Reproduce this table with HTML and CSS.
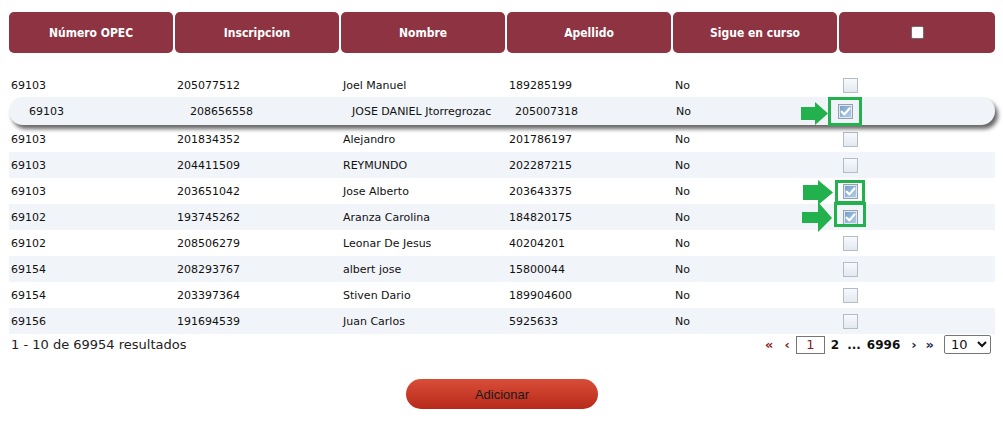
FILE: index.html
```html
<!DOCTYPE html>
<html lang="es">
<head>
<meta charset="utf-8">
<title>Listado</title>
<link rel="stylesheet" href="styles.css">
</head>
<body>
<div class="page">
  <div class="table">
    <div class="head">
      <div class="th">Número OPEC</div>
      <div class="th">Inscripcion</div>
      <div class="th">Nombre</div>
      <div class="th">Apellido</div>
      <div class="th">Sigue en curso</div>
      <div class="th"><span class="hbox"></span></div>
    </div>

    <div class="rows">
      <div class="row">
        <div class="td">69103</div><div class="td">205077512</div><div class="td">Joel Manuel</div><div class="td">189285199</div><div class="td">No</div><div class="td cb"><span class="box"></span></div>
      </div>
      <div class="row lifted">
        <div class="bar">
          <div class="td">69103</div><div class="td">208656558</div><div class="td">JOSE DANIEL Jtorregrozac</div><div class="td">205007318</div><div class="td">No</div><div class="td cb"><span class="box checked"><svg viewBox="0 0 10 10" class="tick"><path d="M1.5 5.2 L4 7.6 L8.6 2.2" /></svg></span></div>
        </div>
      </div>
      <div class="row">
        <div class="td">69103</div><div class="td">201834352</div><div class="td">Alejandro</div><div class="td">201786197</div><div class="td">No</div><div class="td cb"><span class="box"></span></div>
      </div>
      <div class="row alt">
        <div class="td">69103</div><div class="td">204411509</div><div class="td">REYMUNDO</div><div class="td">202287215</div><div class="td">No</div><div class="td cb"><span class="box"></span></div>
      </div>
      <div class="row">
        <div class="td">69103</div><div class="td">203651042</div><div class="td">Jose Alberto</div><div class="td">203643375</div><div class="td">No</div><div class="td cb"><span class="box checked"><svg viewBox="0 0 10 10" class="tick"><path d="M1.5 5.2 L4 7.6 L8.6 2.2" /></svg></span></div>
      </div>
      <div class="row alt">
        <div class="td">69102</div><div class="td">193745262</div><div class="td">Aranza Carolina</div><div class="td">184820175</div><div class="td">No</div><div class="td cb"><span class="box checked"><svg viewBox="0 0 10 10" class="tick"><path d="M1.5 5.2 L4 7.6 L8.6 2.2" /></svg></span></div>
      </div>
      <div class="row">
        <div class="td">69102</div><div class="td">208506279</div><div class="td">Leonar De Jesus</div><div class="td">40204201</div><div class="td">No</div><div class="td cb"><span class="box"></span></div>
      </div>
      <div class="row alt">
        <div class="td">69154</div><div class="td">208293767</div><div class="td">albert jose</div><div class="td">15800044</div><div class="td">No</div><div class="td cb"><span class="box"></span></div>
      </div>
      <div class="row">
        <div class="td">69154</div><div class="td">203397364</div><div class="td">Stiven Dario</div><div class="td">189904600</div><div class="td">No</div><div class="td cb"><span class="box"></span></div>
      </div>
      <div class="row alt">
        <div class="td">69156</div><div class="td">191694539</div><div class="td">Juan Carlos</div><div class="td">5925633</div><div class="td">No</div><div class="td cb"><span class="box"></span></div>
      </div>
    </div>

    <div class="foot">
      <div class="count">1 - 10 de 69954 resultados</div>
      <div class="pager">
        <span class="nav prev">«</span>
        <span class="nav prev single">‹</span>
        <span class="pinput">1</span>
        <span class="pnum">2</span>
        <span class="pnum dots">...</span>
        <span class="pnum">6996</span>
        <span class="nav next">›</span>
        <span class="nav next dbl">»</span>
        <select class="psize"><option>10</option></select>
      </div>
    </div>
  </div>

  <div class="actions">
    <button class="btn">Adicionar</button>
  </div>

  <div class="mark box1"></div>
  <div class="mark box2"></div>
  <div class="mark box3"></div>
  <svg class="arrow a1" viewBox="0 0 27 23"><polygon points="0,5 14,5 14,0 27,11.5 14,23 14,18 0,18"/></svg>
  <svg class="arrow a2" viewBox="0 0 30 25"><polygon points="0,5 15,5 15,0 30,12.5 15,25 15,20 0,20"/></svg>
  <svg class="arrow a3" viewBox="0 0 30 30"><polygon points="0,10 16,10 16,0 30,16 16,30 16,21 0,21"/></svg>
</div>
</body>
</html>
```

FILE: styles.css
```css
* { box-sizing: border-box; }
html, body { margin: 0; padding: 0; background: #fff; }
body {
  font-family: "DejaVu Sans", Verdana, sans-serif;
  font-size: 11px;
  color: #111;
}
.page {
  position: relative;
  width: 1003px;
  height: 424px;
  padding: 12px 8px 0 9px;
}
.table { width: 986px; }

.head {
  display: grid;
  grid-template-columns: repeat(5, 164px) 1fr;
  column-gap: 2px;
  height: 41px;
}
.th {
  background: #8e3341;
  border-radius: 5px;
  color: #fff;
  font-family: "DejaVu Sans Condensed", "DejaVu Sans", sans-serif;
  font-weight: bold;
  font-size: 12px;
  display: flex;
  align-items: center;
  justify-content: center;
}
.hbox {
  width: 13px;
  height: 13px;
  background: #fff;
  border: 1px solid #6f6f6f;
  border-radius: 2px;
}

.rows { margin-top: 19px; }
.row {
  display: grid;
  grid-template-columns: 166px 166px 166px 166px 167px 1fr;
  height: 26px;
  align-items: center;
}
.row.alt { background: #f1f4f9; }
.td { padding-left: 2px; white-space: nowrap; }
.td.cb { padding-left: 3px; display: flex; align-items: center; }

.row.lifted { display: flow-root; height: 28px; }
.bar {
  display: grid;
  grid-template-columns: 161px 162px 163px 161px 162px 1fr;
  align-items: center;
  height: 28px;
  margin-top: -1px;
  padding-left: 20px;
  background: #f0f3f8;
  border-radius: 14px;
  box-shadow: 3px 4px 4px rgba(0, 0, 0, 0.6);
  position: relative;
  z-index: 1;
}
.bar .td { padding-left: 0; }
.bar .td.cb { padding-left: 0; }

.box {
  width: 15px;
  height: 15px;
  border: 1px solid #b5bcc8;
  background: linear-gradient(#f7f9fc, #e3e9f1);
  display: inline-flex;
  align-items: center;
  justify-content: center;
}
.box.checked {
  border: 1px solid #98a0ac;
  background: linear-gradient(135deg, #6f9bc8, #b9d2ea);
  box-shadow: inset 0 0 0 1px #dfe7f0;
}
.tick { width: 11px; height: 11px; }
.tick path {
  fill: none;
  stroke: #fff;
  stroke-width: 2;
  stroke-linecap: round;
  stroke-linejoin: round;
}

.foot {
  display: flex;
  justify-content: space-between;
  align-items: center;
  height: 19px;
  margin-top: 1px;
}
.count {
  font-size: 13px;
  color: #222;
  padding-left: 2px;
}
.pager {
  display: flex;
  align-items: center;
  padding-right: 4px;
  font-size: 12px;
}
.nav { font-weight: bold; font-size: 13px; }
.nav.prev { color: #8b1c1c; }
.nav.next { color: #1d2a50; }
.nav.prev { margin-right: 11px; }
.nav.prev.single { margin-right: 6px; }
.nav.next { margin-left: 11px; }
.nav.next.dbl { margin-left: 9px; }
.pinput {
  width: 29px;
  height: 18px;
  border: 1px solid #767676;
  font-size: 13px;
  color: #8b1c1c;
  display: flex;
  align-items: center;
  justify-content: center;
}
.pnum { font-weight: bold; color: #111; margin-left: 6px; }
.pnum.dots { margin-left: 8px; font-weight: bold; }
.psize {
  margin-left: 10px;
  width: 47px;
  height: 19px;
  font-family: "DejaVu Sans", sans-serif;
  font-size: 13px;
  color: #111;
  border: 1px solid #767676;
  border-radius: 2px;
  background: #fff;
  padding: 0 0 0 2px;
}

.actions {
  display: flex;
  justify-content: center;
  margin-top: 25px;
}
.btn {
  width: 192px;
  height: 30px;
  border: none;
  border-radius: 15px;
  background: linear-gradient(#d84e38, #b8291a);
  font-family: "Liberation Sans", Arial, sans-serif;
  font-size: 13px;
  color: #1a1a1a;
  padding: 0;
}

.mark {
  position: absolute;
  border: 3px solid #22b14c;
  z-index: 3;
}
.box1 { left: 828px; top: 97px; width: 34px; height: 29px; }
.box2 { left: 835px; top: 180px; width: 30px; height: 24px; }
.box3 { left: 834px; top: 202px; width: 32px; height: 25px; }

.arrow { position: absolute; z-index: 3; }
.arrow polygon { fill: #22b14c; }
.a1 { left: 801px; top: 102px; width: 27px; height: 23px; }
.a2 { left: 803px; top: 180px; width: 30px; height: 25px; }
.a3 { left: 802px; top: 202px; width: 30px; height: 30px; }
```
